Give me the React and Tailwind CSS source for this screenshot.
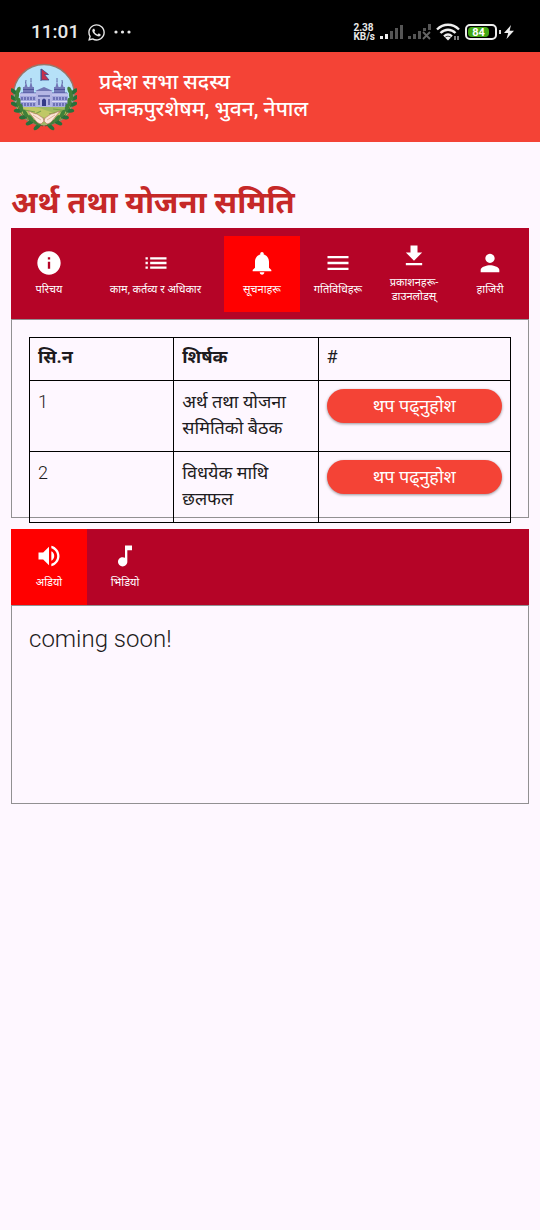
import { MdInfo, MdList, MdNotifications, MdMenu, MdFileDownload, MdPerson, MdVolumeUp, MdMusicNote } from 'react-icons/md';
import { FaWhatsapp } from 'react-icons/fa';

const tabs = [
  { label: 'परिचय', Icon: MdInfo, size: 'w-19 h-19' },
  { label: 'काम, कर्तव्य र अधिकार', Icon: MdList, size: 'flex-1 h-19' },
  { label: 'सूचनाहरू', Icon: MdNotifications, size: 'w-19 h-19', active: true },
  { label: 'गतिविधिहरू', Icon: MdMenu, size: 'w-19 h-19' },
  { label: 'प्रकाशनहरू-\nडाउनलोडस्', Icon: MdFileDownload, size: 'w-19 h-[91px]' },
  { label: 'हाजिरी', Icon: MdPerson, size: 'w-19 h-19' },
];

const mediaTabs = [
  { label: 'अडियो', Icon: MdVolumeUp, size: 'w-19 h-19', active: true },
  { label: 'भिडियो', Icon: MdMusicNote, size: 'w-19 h-19' },
];

const notices = [
  { no: '1', title: 'अर्थ तथा योजना समितिको बैठक' },
  { no: '2', title: 'विधयेक माथि छलफल' },
];

function Tab({ label, Icon, size, active }) {
  return (
    <button
      type="button"
      role="tab"
      aria-selected={!!active}
      className={`flex flex-col items-center justify-center gap-1.5 pb-0.5 text-white ${size} ${active ? 'bg-[#ff0000]' : ''}`}
    >
      <Icon className="size-7 shrink-0" />
      <span className="text-[11px] leading-[14px] whitespace-pre">{label}</span>
    </button>
  );
}

function Signal({ weak, noSim }) {
  return (
    <svg viewBox="0 0 23 16" className="h-4 w-[23px]" aria-hidden="true">
      <rect x="0" y="12" width="3" height="3" fill={weak ? '#555' : '#eee'} />
      <rect x="5" y="10" width="3" height="5" fill={weak ? '#555' : '#eee'} />
      <rect x="10" y="7" width="3" height="8" fill="#555" />
      {noSim ? (
        <>
          <path d="M15 8l7 7M22 8l-7 7" stroke="#666" strokeWidth="1.8" />
          <path d="M15 4h3v3h-3zM20 0h3v6h-3z" fill="#555" />
        </>
      ) : (
        <>
          <rect x="15" y="4" width="3" height="11" fill="#555" />
          <rect x="20" y="1" width="3" height="14" fill="#555" />
        </>
      )}
    </svg>
  );
}

function StatusBar() {
  return (
    <div className="flex h-13 items-center justify-between bg-black pt-3 pr-[26px] pl-[31px] text-[#e8e8e8]">
      <div className="flex items-center gap-2">
        <span className="text-[19px] leading-6 font-medium">11:01</span>
        <FaWhatsapp className="size-[19px]" />
        <svg viewBox="0 0 17 4" className="h-1 w-[17px]" fill="currentColor" aria-hidden="true">
          <circle cx="2" cy="2" r="1.6" />
          <circle cx="8.5" cy="2" r="1.6" />
          <circle cx="15" cy="2" r="1.6" />
        </svg>
      </div>
      <div className="flex items-center gap-[5px]">
        <span className="text-[10px] leading-[9px] font-bold">
          2.38
          <br />
          KB/s
        </span>
        <Signal />
        <Signal weak noSim />
        <svg viewBox="0 0 24 18" className="h-[18px] w-6" fill="none" stroke="#f0f0f0" strokeWidth="2.4" aria-hidden="true">
          <path d="M1 6.5C7.500 .2 16.500 .2 23 6.500M4.500 10c4.500-4.300 10.500-4.300 15 0M8 13.300c2.500-2.200 5.500-2.200 8 0" />
          <path d="M12 17.500l-3-3c2-1.400 4-1.400 6 0z" fill="#f0f0f0" stroke="none" />
          <path d="M19 13v4M22 13v4" stroke="#aaa" strokeWidth="1.500" />
        </svg>
        <div className="flex items-center gap-0.5">
          <div className="flex h-4 w-8 items-center rounded-[5px] border-2 border-[#eee] p-px">
            <span className="flex h-full w-[21px] items-center justify-center rounded-sm bg-[#43a815] text-[11px] leading-none font-bold text-white">84</span>
          </div>
          <span className="h-1 w-0.5 bg-[#ddd]" />
          <svg viewBox="0 0 10 14" className="ml-px h-3.5 w-2.5" fill="#eee" aria-hidden="true">
            <path d="M7 0L0 8h4.200L2.500 14 10 5.800H5.600z" />
          </svg>
        </div>
      </div>
    </div>
  );
}

const leaves = [
  [5, 29, -20], [4, 35, -30], [6, 41, -40], [9, 47, -55], [14, 53, -70], [20, 58, -85], [27, 62, -100],
];

function Branch() {
  return (
    <g>
      <path d="M4 30C4 46 14 59 32 63" fill="none" stroke="#6b5a25" strokeWidth="1" />
      {leaves.map(([x, y, r]) => (
        <g key={y} transform={`translate(${x} ${y}) rotate(${r})`}>
          <ellipse cx="-1" cy="-2" rx="2" ry="4.200" transform="rotate(-30)" fill="#28703a" />
          <ellipse cx="1.500" cy="-2" rx="2" ry="4.200" transform="rotate(42)" fill="#41803a" />
        </g>
      ))}
    </g>
  );
}

function Tower() {
  return (
    <g>
      <path d="M12 30V24h11v6zM13.500 24l1.500-5 1.500 5zM18.500 24l1.500-6 1.500 6z" fill="#7379b8" />
      <path d="M14.500 20.500l.5-3.500M20 19v-4" stroke="#454a91" strokeWidth=".8" />
      <path d="M10 30h16M12 26.500h11" stroke="#4c529b" strokeWidth="1" />
      <path d="M9 30h17v14H9z" fill="#a6a9df" />
      <path d="M11 34v3M14 34v3M17 34v3M20 34v3M23 34v3M11 40v3M14 40v3M17 40v3M20 40v3M23 40v3" stroke="#4b4f9c" strokeWidth="1.200" />
      <path d="M9 32h17M9 38.500h17" stroke="#e8e8fa" strokeWidth=".8" />
    </g>
  );
}

function Emblem() {
  return (
    <svg viewBox="0 0 66 68" className="h-[68px] w-[66px] shrink-0" role="img" aria-label="Emblem">
      <defs>
        <clipPath id="disc">
          <circle cx="33" cy="32" r="30" />
        </clipPath>
      </defs>
      <circle cx="33" cy="32" r="30.500" fill="#b6e1f8" stroke="#9b7567" strokeWidth="1.500" />
      <g clipPath="url(#disc)">
        <path d="M0 41h66v27H0z" fill="#9fba62" />
        <path d="M0 47q18-7 34 0t32-2v8q-20 7-34 1T0 54z" fill="#c0c866" />
        <path d="M8 46l16 3M42 46l16 2M18 54l12-6M38 51l13-3" stroke="#77a24b" strokeWidth="1.200" />
        <Tower />
        <g transform="translate(66 0) scale(-1 1)">
          <Tower />
        </g>
        <path d="M25 28h16v16H25z" fill="#b4b6e4" />
        <path d="M24 28l9-4 9 4zM27 32h12v2H27z" fill="#7177b4" />
        <path d="M28 36v6M38 36v6" stroke="#4b4f9c" strokeWidth="1.300" />
        <path d="M31 43v-6q2-3 4 0v6z" fill="#343b89" />
      </g>
      <path d="M30 6v12" stroke="#344487" strokeWidth="1" />
      <path d="M30.500 6l7 5.500h-4l4.500 5.500h-7.500z" fill="#c52f4a" stroke="#344487" strokeWidth=".7" />
      <Branch />
      <g transform="translate(66 0) scale(-1 1)">
        <Branch />
      </g>
      <path d="M17 48c4 1 6 3 9 3l6 4 1 3-3 3c-5-1-6-5-9-8zM49 48c-4 1-6 3-9 3l-6 4-1 3 3 3c5-1 6-5 9-8z" fill="#fae7d8" stroke="#bd8068" strokeWidth=".7" />
      <path d="M22 52l8 5M44 52l-8 5" stroke="#d4a087" strokeWidth=".7" />
    </svg>
  );
}

export default function App() {
  return (
    <div className="min-h-screen bg-[#fef7ff] font-['Roboto','Noto_Sans_Devanagari','Noto_Sans',sans-serif] text-[#1d1b20]">
      <StatusBar />
      <header className="flex h-[90px] items-center gap-[22px] bg-[#f44336] px-[11px]">
        <Emblem />
        <div className="pb-0.5 text-[21px] leading-[27px] font-medium text-white">
          <p>प्रदेश सभा सदस्य</p>
          <p>जनकपुरशेषम, भुवन, नेपाल</p>
        </div>
      </header>
      <main className="px-[11px] pt-10">
        <h1 className="h-[46px] text-[31px] leading-[42px] font-bold text-[#c62828]">अर्थ तथा योजना समिति</h1>
        <div role="tablist" className="flex h-[91px] items-center bg-[#b50427] pr-px">
          {tabs.map((t) => (
            <Tab key={t.label} {...t} />
          ))}
        </div>
        <section className="h-[199px] border border-[#929092] px-[17px] pt-[17px]">
          <table className="w-full table-fixed border-collapse text-left text-[18px] leading-[26px]">
            <colgroup>
              <col className="w-[30%]" />
              <col className="w-[30%]" />
              <col className="w-[40%]" />
            </colgroup>
            <thead>
              <tr className="h-[43px]">
                <th className="border border-black px-2 pb-1 font-bold">सि.न</th>
                <th className="border border-black px-2 pb-1 font-bold">शिर्षक</th>
                <th className="border border-black px-2 pb-1 font-normal">#</th>
              </tr>
            </thead>
            <tbody>
              {notices.map((n) => (
                <tr key={n.no} className="h-[70px] align-top">
                  <td className="border border-black px-2 pt-2 font-light">{n.no}</td>
                  <td className="border border-black px-2 pt-2 pb-2.5">{n.title}</td>
                  <td className="border border-black px-2 pt-2">
                    <button type="button" className="block h-[34px] w-full rounded-full bg-[#f44336] text-[18px] leading-[34px] text-white shadow-[0_1px_3px_rgba(0,0,0,0.4)]">
                      थप पढ्नुहोश
                    </button>
                  </td>
                </tr>
              ))}
            </tbody>
          </table>
        </section>
        <div role="tablist" className="mt-[11px] flex h-19 items-center bg-[#b50427]">
          {mediaTabs.map((t) => (
            <Tab key={t.label} {...t} />
          ))}
        </div>
        <section className="h-[199px] border border-[#929092] px-[17px] pt-[17px]">
          <p className="text-2xl leading-8 font-light">coming soon!</p>
        </section>
      </main>
    </div>
  );
}
